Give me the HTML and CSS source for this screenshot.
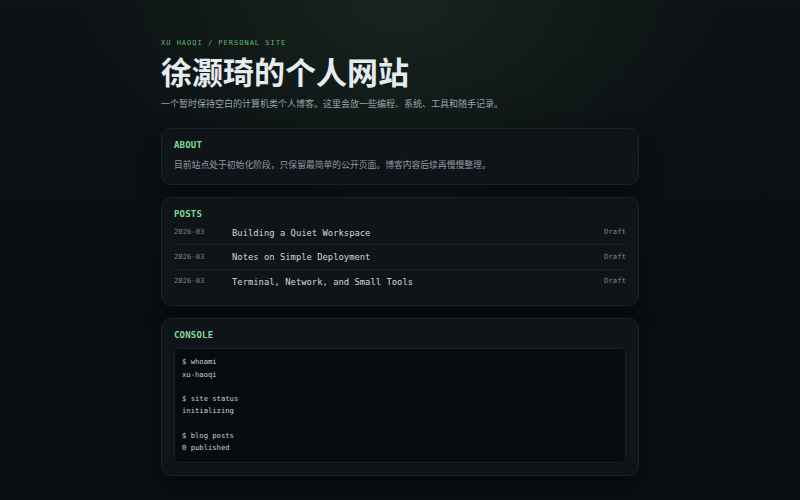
FILE: index.html
```html
<!DOCTYPE html>
<html lang="zh-CN">
<head>
<meta charset="utf-8">
<title>徐灏琦的个人网站</title>
<link rel="stylesheet" href="styles.css">
</head>
<body>
<main class="page">
  <header class="hero">
    <p class="eyebrow">XU HAOQI / PERSONAL SITE</p>
    <h1 class="title">徐灏琦的个人网站</h1>
    <p class="lead">一个暂时保持空白的计算机类个人博客。这里会放一些编程、系统、工具和随手记录。</p>
  </header>

  <section class="card">
    <h2 class="label">ABOUT</h2>
    <p class="about">目前站点处于初始化阶段，只保留最简单的公开页面。博客内容后续再慢慢整理。</p>
  </section>

  <section class="card">
    <h2 class="label">POSTS</h2>
    <ul class="posts">
      <li class="post"><span class="date">2026-03</span><span class="post-title">Building a Quiet Workspace</span><span class="status">Draft</span></li>
      <li class="post"><span class="date">2026-03</span><span class="post-title">Notes on Simple Deployment</span><span class="status">Draft</span></li>
      <li class="post"><span class="date">2026-03</span><span class="post-title">Terminal, Network, and Small Tools</span><span class="status">Draft</span></li>
    </ul>
  </section>

  <section class="card">
    <h2 class="label">CONSOLE</h2>
<pre class="console">$ whoami
xu-haoqi

$ site status
initializing

$ blog posts
0 published</pre>
  </section>
</main>
</body>
</html>
```

FILE: styles.css
```css
* { box-sizing: border-box; }

html, body {
  margin: 0;
  padding: 0;
}

body {
  min-height: 100vh;
  background-color: #0a0e12;
  background-image:
    radial-gradient(ellipse 320px 230px at 400px 0px, rgba(60, 110, 70, 0.2), rgba(60, 110, 70, 0) 100%),
    linear-gradient(180deg, #0d1214 0%, #0a0e12 60%, #0a0d11 100%);
  color: #d0d7de;
  font-family: "Noto Sans CJK SC", "Noto Sans", sans-serif;
}

.page {
  width: 478px;
  margin: 0 auto;
  padding: 38px 0 20px;
  display: flex;
  flex-direction: column;
  gap: 12px;
}

.hero {
  margin-bottom: 5px;
}

.eyebrow {
  margin: 0;
  font-family: "DejaVu Sans Mono", monospace;
  font-size: 7px;
  line-height: 10px;
  letter-spacing: 1px;
  color: #5cb86c;
}

.title {
  margin: 4px 0 0;
  font-family: "Noto Sans CJK SC", sans-serif;
  font-weight: 700;
  font-size: 31px;
  line-height: 37px;
  color: #e6ebef;
}

.lead {
  margin: 7.5px 0 0;
  font-size: 9px;
  line-height: 14px;
  color: #9aa3ac;
}

.card {
  background: #0f1418;
  border: 1px solid #1b2229;
  border-radius: 10px;
  padding: 12px;
  box-shadow: 0 6px 20px rgba(0, 0, 0, 0.35);
}

.label {
  margin: 0 0 8px;
  font-family: "DejaVu Sans Mono", monospace;
  font-weight: 700;
  font-size: 9px;
  line-height: 9px;
  letter-spacing: 0.2px;
  color: #7fdf9a;
}

.about {
  margin: 0;
  font-size: 8.8px;
  line-height: 14px;
  color: #929ba4;
}

.posts {
  list-style: none;
  margin: 0;
  padding: 0;
}

.post {
  display: flex;
  align-items: center;
  padding: 5.75px 0;
  border-bottom: 1px solid #1a2027;
  font-family: "DejaVu Sans Mono", monospace;
}

.post:first-child { padding-top: 0; }
.post:last-child { border-bottom: none; }

.date {
  width: 58px;
  flex: none;
  font-size: 7.2px;
  color: #7b848d;
  margin-top: -2px;
}

.post-title {
  flex: 1;
  font-size: 8.85px;
  line-height: 12px;
  color: #d2d8dd;
}

.status {
  flex: none;
  font-size: 7.3px;
  color: #7b848d;
  margin-top: -2px;
}

.console {
  margin: 0;
  background: #080b0e;
  border: 1px solid #1a2027;
  border-radius: 6px;
  padding: 7px;
  font-family: "DejaVu Sans Mono", monospace;
  font-size: 7.2px;
  line-height: 12.29px;
  color: #c9d0d6;
}
```
